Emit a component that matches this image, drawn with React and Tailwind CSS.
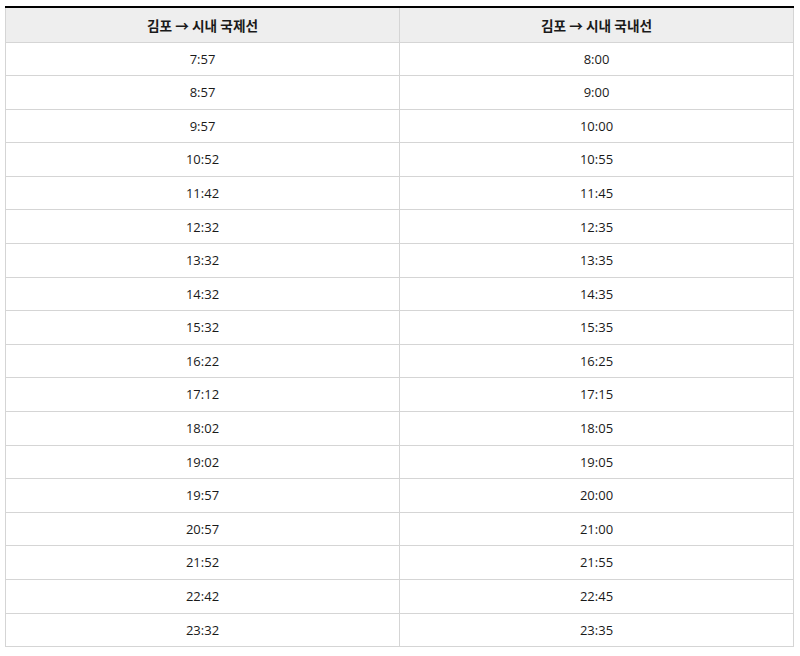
import React from "react";

const left = ["7:57","8:57","9:57","10:52","11:42","12:32","13:32","14:32","15:32","16:22","17:12","18:02","19:02","19:57","20:57","21:52","22:42","23:32"];
const right = ["8:00","9:00","10:00","10:55","11:45","12:35","13:35","14:35","15:35","16:25","17:15","18:05","19:05","20:00","21:00","21:55","22:45","23:35"];

export default function App() {
  return (
    <div className="bg-white w-[800px] h-[656px] pt-[6px] pl-[5px]" style={{ fontFamily: '"Open Sans", "Noto Sans CJK KR", sans-serif' }}>
      <table className="w-[789px] border-collapse border-t-2 border-t-black text-[13px] text-[#1a1a1a]">
        <thead>
          <tr className="h-[35px] bg-[#eeeeee]">
            <th className="border border-[#d5d5d5] border-t-black border-t-2 font-bold text-center w-[394px] text-[13.7px] pt-[1px]" style={{ fontFamily: '"Noto Sans CJK KR", sans-serif' }}>김포 → 시내 국제선</th>
            <th className="border border-[#d5d5d5] border-t-black border-t-2 font-bold text-center text-[13.7px] pt-[1px]" style={{ fontFamily: '"Noto Sans CJK KR", sans-serif' }}>김포 → 시내 국내선</th>
          </tr>
        </thead>
        <tbody>
          {left.map((l, i) => (
            <tr key={i} className="h-[33.6px]">
              <td className="border border-[#d5d5d5] text-center p-0 pt-[1px]">{l}</td>
              <td className="border border-[#d5d5d5] text-center p-0 pt-[1px]">{right[i]}</td>
            </tr>
          ))}
        </tbody>
      </table>
    </div>
  );
}
